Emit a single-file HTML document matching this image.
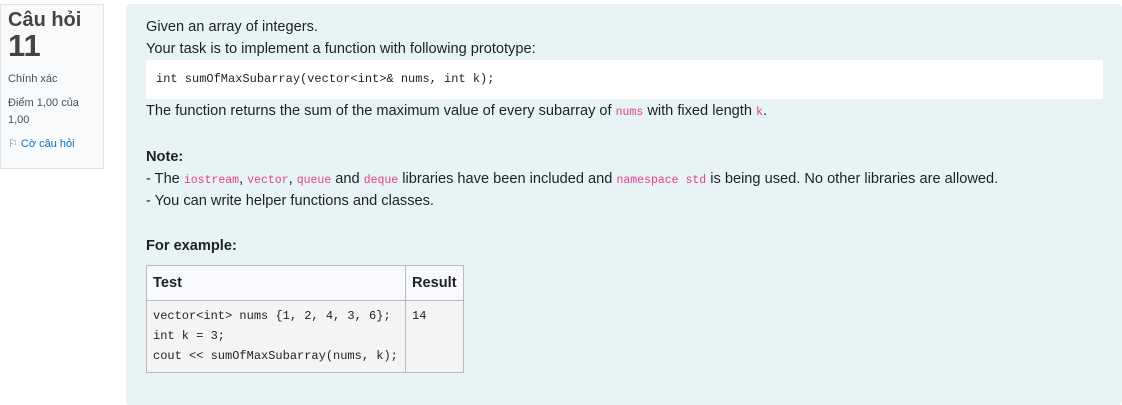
<!DOCTYPE html>
<html><head><meta charset="utf-8"><style>
body{margin:0;width:1122px;height:405px;background:#fff;font-family:"Liberation Sans",sans-serif;color:#1d2125;position:relative;overflow:hidden}
.info{position:absolute;left:0;top:4px;width:104px;height:165px;background:#f8f9fa;border:1px solid #dee2e6;box-sizing:border-box;padding:4px 7px}
.h{font-weight:bold;color:#444;font-size:20px;line-height:22px}
.n{font-weight:bold;color:#444;font-size:31px;line-height:30px}
.s{font-size:11px;color:#495057}
.main{position:absolute;left:126px;top:4px;width:996px;height:401px;background:#e7f3f5;border-radius:4px}
.t{position:absolute;left:146px;font-size:14.6px;line-height:22px;white-space:nowrap}
code{font-family:"Liberation Mono",monospace;font-size:11.5px;color:#e83e8c}
.pre{position:absolute;left:146px;top:60px;width:957px;height:39px;background:#fff;}
.pre span{position:absolute;left:10px;top:12px;font-family:"Liberation Mono",monospace;font-size:12px;color:#1d2125}
table{position:absolute;left:146px;top:265px;border-collapse:collapse;font-size:14.6px}
td,th{border:1px solid #bbb;text-align:left}
th{background:#f8f9fc;height:34px;padding:0 6px;font-weight:bold;vertical-align:middle}
td{background:#f4f4f4;padding:5px 6px 6px;font-family:"Liberation Mono",monospace;font-size:12px;line-height:20px;vertical-align:top}
</style></head><body>
<div class="info">
<div class="h">Câu hỏi</div>
<div class="n">11</div>
<div class="s" style="margin-top:12px">Chính xác</div>
<div class="s" style="margin-top:10px;line-height:17px">Điểm 1,00 của 1,00</div>
<div class="s" style="margin-top:8px;color:#0f6cbf"><span style="color:#777">⚐</span> Cờ câu hỏi</div>
</div>
<div class="main"></div>
<div class="t" style="top:16px">Given an array of integers.</div>
<div class="t" style="top:38px">Your task is to implement a function with following prototype:</div>
<div class="pre"><span>int sumOfMaxSubarray(vector&lt;int&gt;&amp; nums, int k);</span></div>
<div class="t" style="top:100px">The function returns the sum of the maximum value of every subarray of <code>nums</code> with fixed length <code>k</code>.</div>
<div class="t" style="top:146px;font-weight:bold">Note:</div>
<div class="t" style="top:168px">- The <code>iostream</code>, <code>vector</code>, <code>queue</code> and <code>deque</code> libraries have been included and <code>namespace std</code> is being used. No other libraries are allowed.</div>
<div class="t" style="top:190px">- You can write helper functions and classes.</div>
<div class="t" style="top:235px;font-weight:bold">For example:</div>
<table><tr><th style="width:246px">Test</th><th style="width:44px">Result</th></tr>
<tr><td>vector&lt;int&gt; nums {1, 2, 4, 3, 6};<br>int k = 3;<br>cout &lt;&lt; sumOfMaxSubarray(nums, k);</td><td>14</td></tr></table>
</body></html>
